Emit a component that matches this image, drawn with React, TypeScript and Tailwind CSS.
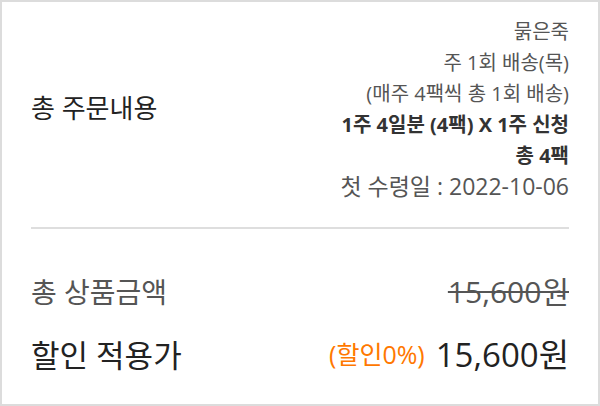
import React from 'react';

const orderLines = [
  { text: '묽은죽', bold: false },
  { text: '주 1회 배송(목)', bold: false },
  { text: '(매주 4팩씩 총 1회 배송)', bold: false },
  { text: '1주 4일분 (4팩) X 1주 신청', bold: true },
  { text: '총 4팩', bold: true },
];

export default function App() {
  return (
    <div
      className="w-[600px] h-[406px] bg-white border-2 border-[#dcdcdc] px-[29px] flex flex-col"
      style={{ fontFamily: '"Open Sans", "Noto Sans CJK KR", sans-serif' }}
    >
      {/* 주문내용 */}
      <div className="flex items-center justify-between pt-[14px] pb-[26px]">
        <h2 className="text-[26px] text-[#222]">총 주문내용</h2>
        <div className="flex flex-col items-end text-[20px] leading-[31px] text-[#555]">
          {orderLines.map((line) => (
            <p key={line.text} className={line.bold ? 'font-bold text-[#333]' : ''}>
              {line.text}
            </p>
          ))}
          <p className="text-[23px] leading-[30px]">첫 수령일 : 2022-10-06</p>
        </div>
      </div>

      <div className="h-[2px] bg-[#dedede]" />

      {/* 금액 */}
      <div className="flex items-center justify-between mt-[40px]">
        <span className="text-[28px] text-[#555]">총 상품금액</span>
        <span className="text-[30px] text-[#555] line-through decoration-2">15,600원</span>
      </div>
      <div className="flex items-center justify-between mt-[16px]">
        <span className="text-[31px] text-[#222]">할인 적용가</span>
        <div className="flex items-center gap-[11px]">
          <span className="text-[25px] text-[#ff7800]">(할인0%)</span>
          <span className="text-[33px] text-[#222]">15,600원</span>
        </div>
      </div>
    </div>
  );
}
